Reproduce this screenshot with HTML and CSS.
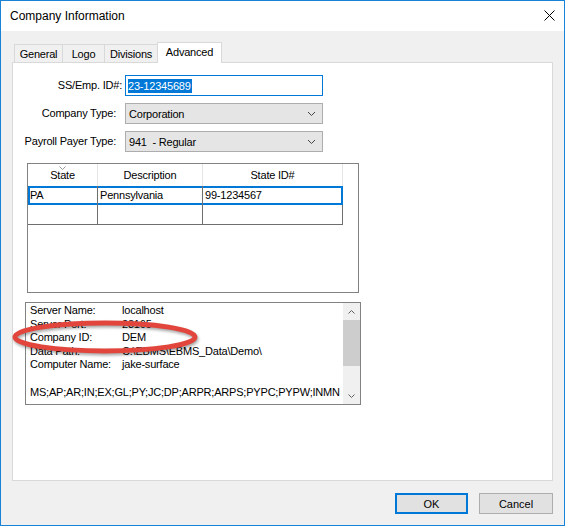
FILE: index.html
```html
<!DOCTYPE html>
<html>
<head>
<meta charset="utf-8">
<link rel="stylesheet" href="styles.css">
</head>
<body>
<div class="window">
  <div class="titlebar">
    <span class="title">Company Information</span>
    <svg class="close" width="11" height="11" viewBox="0 0 11 11"><path d="M0.5 0.5 L10.5 10.5 M10.5 0.5 L0.5 10.5" stroke="#000" stroke-width="1" fill="none"/></svg>
  </div>
  <div class="client">
    <div class="tabs">
      <div class="tab t-general">General</div>
      <div class="tab t-logo">Logo</div>
      <div class="tab t-div">Divisions</div>
      <div class="tab t-adv active">Advanced</div>
    </div>
    <div class="panel">
      <div class="form">
        <label class="lbl">SS/Emp. ID#:</label>
        <div class="input"><span class="sel">23-12345689</span></div>
        <label class="lbl lbl-in">Company Type:</label>
        <div class="select"><span>Corporation</span><svg class="chev" width="9" height="6" viewBox="0 0 9 6"><path d="M1 1 L4.5 4.5 L8 1" stroke="#444" stroke-width="1" fill="none"/></svg></div>
        <label class="lbl lbl-in">Payroll Payer Type:</label>
        <div class="select"><span>941&nbsp; - Regular</span><svg class="chev" width="9" height="6" viewBox="0 0 9 6"><path d="M1 1 L4.5 4.5 L8 1" stroke="#444" stroke-width="1" fill="none"/></svg></div>
      </div>

      <div class="grid">
        <div class="row head">
          <div class="cell c1 sorted">State<svg class="sort" width="7" height="4" viewBox="0 0 7 4"><path d="M0.5 0.5 L3.5 3.5 L6.5 0.5" stroke="#999" stroke-width="1" fill="none"/></svg></div>
          <div class="cell c2">Description</div>
          <div class="cell c3">State ID#</div>
        </div>
        <div class="row data selected">
          <div class="cell c1">PA</div>
          <div class="cell c2">Pennsylvania</div>
          <div class="cell c3">99-1234567</div>
        </div>
        <div class="row data">
          <div class="cell c1"></div>
          <div class="cell c2"></div>
          <div class="cell c3"></div>
        </div>
      </div>

      <div class="info">
        <div class="info-text">
          <div class="line"><span class="k">Server Name:</span><span>localhost</span></div>
          <div class="line"><span class="k">Server Port:</span><span>23165</span></div>
          <div class="line"><span class="k">Company ID:</span><span>DEM</span></div>
          <div class="line"><span class="k">Data Path:</span><span>C:\EBMS\EBMS_Data\Demo\</span></div>
          <div class="line"><span class="k">Computer Name:</span><span>jake-surface</span></div>
          <div class="line">&nbsp;</div>
          <div class="line">MS;AP;AR;IN;EX;GL;PY;JC;DP;ARPR;ARPS;PYPC;PYPW;INMN</div>
        </div>
        <div class="vscroll">
          <div class="sbtn"><svg width="7" height="4" viewBox="0 0 7 4"><path d="M0.5 3.5 L3.5 0.5 L6.5 3.5" stroke="#606060" stroke-width="1" fill="none"/></svg></div>
          <div class="track"><div class="thumb"></div></div>
          <div class="sbtn"><svg width="7" height="4" viewBox="0 0 7 4"><path d="M0.5 0.5 L3.5 3.5 L6.5 0.5" stroke="#606060" stroke-width="1" fill="none"/></svg></div>
        </div>
      </div>
    </div>
    <div class="buttons">
      <button class="btn default">OK</button>
      <button class="btn cancel">Cancel</button>
    </div>
  </div>

  <svg class="annot" width="200" height="46" viewBox="0 0 200 46">
    <ellipse cx="98" cy="22" rx="90" ry="14" fill="none" stroke="#e2453c" stroke-width="5"/>
  </svg>
</div>
</body>
</html>
```

FILE: styles.css
```css
* { box-sizing: border-box; }

body {
  margin: 0;
  font-family: "Liberation Sans", Arial, sans-serif;
  font-size: 11px;
  letter-spacing: -0.2px;
  color: #000;
}

.window {
  position: relative;
  width: 565px;
  height: 526px;
  border: 1px solid #1883d7;
  background: #f0f0f0;
  display: flex;
  flex-direction: column;
}

.titlebar {
  height: 30px;
  flex: none;
  background: #fff;
  display: flex;
  align-items: center;
  justify-content: space-between;
  padding: 0 9px 0 9px;
}

.title {
  font-size: 12px;
  letter-spacing: 0;
  color: #000;
}

.close { display: block; margin-top: -1px; }

.client {
  flex: 1;
  padding: 11px 11px 0 11px;
}

.tabs {
  display: flex;
  align-items: flex-end;
  height: 20px;
  padding-left: 2px;
}

.tab {
  height: 18px;
  border: 1px solid #d9d9d9;
  border-bottom: none;
  background: #f0f0f0;
  margin-left: -1px;
  text-align: center;
  line-height: 19px;
}

.t-general { width: 49px; margin-left: 0; }
.t-logo { width: 43px; }
.t-div { width: 54px; }
.t-adv { width: 65px; }

.tab.active {
  height: 21px;
  margin-bottom: -1px;
  background: #fff;
  position: relative;
  z-index: 1;
  line-height: 18px;
}

.panel {
  height: 419px;
  border: 1px solid #d9d9d9;
  background: #fff;
}

/* form */
.form {
  display: grid;
  grid-template-columns: 109px 198px;
  grid-auto-rows: 21px;
  column-gap: 3px;
  row-gap: 7px;
  margin-top: 12px;
}

.lbl {
  text-align: right;
  line-height: 21px;
}

.lbl-in { padding-right: 6px; }

.input {
  border: 1px solid #0078d7;
  background: #fff;
  padding: 3px 0 0 2px;
}

.sel {
  display: inline-block;
  background: #0078d7;
  color: #fff;
  line-height: 14px;
  height: 14px;
  padding-right: 1px;
}

.select {
  border: 1px solid #adadad;
  background: #e5e5e5;
  display: flex;
  align-items: center;
  justify-content: space-between;
  padding: 0 6px 0 3px;
}

.chev { display: block; }

/* grid */
.grid {
  margin: 11px 0 0 14px;
  width: 332px;
  height: 130px;
  border: 1px solid #828282;
  background: #fff;
}

.row {
  display: flex;
  width: 315px;
}

.row.head { height: 22px; }

.cell {
  padding-left: 2px;
  white-space: nowrap;
}

.c1 { width: 70px; }
.c2 { width: 105px; }
.c3 { width: 140px; }

.head .cell {
  text-align: center;
  padding-left: 0;
  line-height: 22px;
  border-right: 1px solid #e5e5e5;
  position: relative;
}

.sort {
  position: absolute;
  left: 31px;
  top: 2px;
  display: block;
}

.row.data {
  height: 20px;
}

.row.data .cell {
  border-right: 1px solid #6e6e6e;
  border-bottom: 1px solid #6e6e6e;
  line-height: 19px;
}

.row.selected {
  height: 19px;
  box-shadow: inset 0 0 0 2px #0078d7;
}

.row.selected .cell {
  border-bottom: none;
  line-height: 18px;
}

.row.selected .c3 { border-right: none; }

/* info box */
.info {
  margin: 9px 0 0 12px;
  width: 336px;
  height: 103px;
  border: 1px solid #828282;
  display: flex;
  background: #fff;
}

.info-text {
  flex: 1;
  overflow: hidden;
  padding: 1px 0 0 4px;
  white-space: nowrap;
}

.line {
  height: 13.6px;
  line-height: 13.6px;
  display: flex;
}

.k { width: 92px; flex: none; }

.vscroll {
  width: 17px;
  flex: none;
  background: #f0f0f0;
  display: flex;
  flex-direction: column;
}

.sbtn {
  height: 17px;
  display: flex;
  align-items: center;
  justify-content: center;
}

.track {
  flex: 1;
}

.thumb {
  height: 46px;
  background: #cdcdcd;
}

/* buttons */
.buttons {
  display: flex;
  justify-content: flex-end;
  gap: 11px;
  margin-top: 12px;
}

.btn {
  height: 21px;
  background: #e1e1e1;
  border: 1px solid #adadad;
  font-family: "Liberation Sans", Arial, sans-serif;
  font-size: 11px;
  color: #000;
  padding: 0;
}

.btn.default {
  width: 73px;
  border: 2px solid #0078d7;
}

.btn.cancel { width: 74px; }

/* annotation overlay */
.annot {
  position: absolute;
  left: 6px;
  top: 314px;
  filter: drop-shadow(1px 2px 1.5px rgba(0,0,0,0.35));
}
```
